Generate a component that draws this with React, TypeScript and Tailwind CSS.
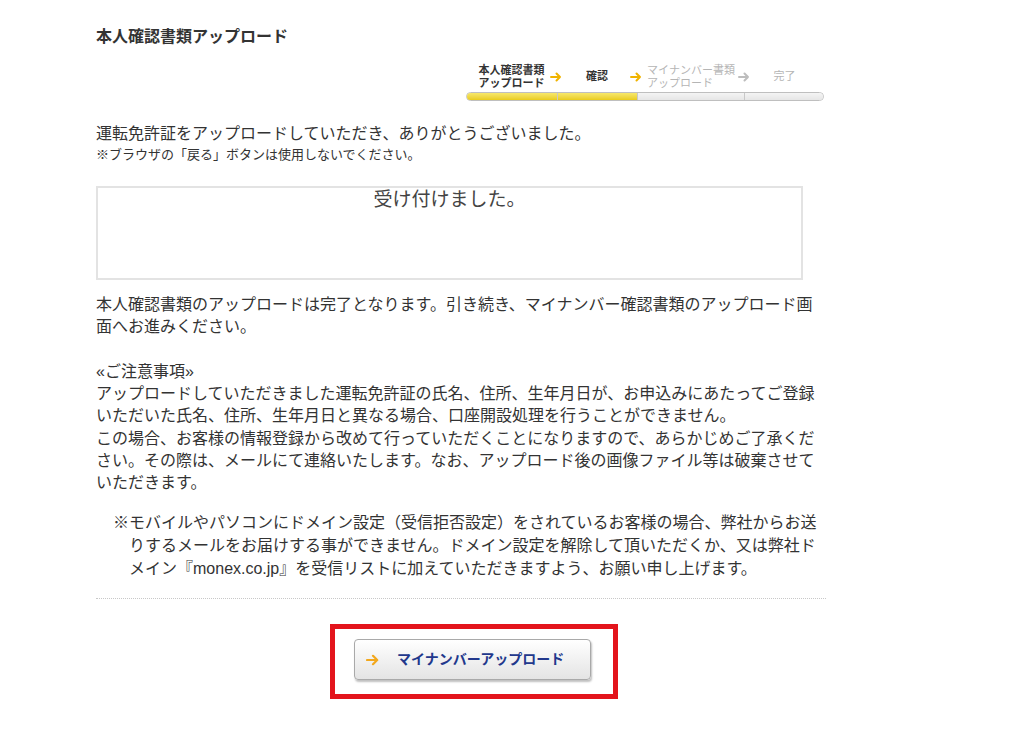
const steps = [
  { label: ["本人確認書類", "アップロード"], width: 91, done: true },
  { label: ["確認"], width: 80, done: true },
  { label: ["マイナンバー書類", "アップロード"], width: 108, done: false },
  { label: ["完了"], width: 79, done: false },
];

const Arrow = ({ color }: { color: string }) => (
  <svg width="12" height="10" viewBox="0 0 12 10" fill="none">
    <path d="M1 5h9M6.5 1.5L10 5l-3.5 3.5" stroke={color} strokeWidth="2" strokeLinecap="round" strokeLinejoin="round" />
  </svg>
);

const Progress = () => (
  <div className="ml-auto mr-[2px] w-[358px]">
    <div className="flex h-[31px] items-center">
      {steps.map((s, i) => (
        <div key={i} className="relative flex h-full items-center justify-center" style={{ width: s.width }}>
          <div className={`text-left text-[11px] leading-[13px] ${s.done ? "font-bold text-[#333]" : "text-[#b5b5b5]"}`}>
            {s.label.map((l) => (
              <div key={l}>{l}</div>
            ))}
          </div>
          {i < steps.length - 1 && (
            <div className="absolute right-[-5px] top-[11px]">
              <Arrow color={s.done ? "#f0b400" : "#bdbdbd"} />
            </div>
          )}
        </div>
      ))}
    </div>
    <div className="flex h-[9px] overflow-hidden rounded-full border border-[#bfbfbf]">
      {steps.map((s, i) => (
        <div
          key={i}
          className={`h-full ${i > 0 ? "border-l border-[#c8c8c8]" : ""} ${
            s.done ? "bg-gradient-to-b from-[#f7e86a] to-[#e9cc16]" : "bg-gradient-to-b from-[#f4f4f4] to-[#e6e6e6]"
          }`}
          style={{ width: s.width }}
        />
      ))}
    </div>
  </div>
);

export default function App() {
  return (
    <div className="min-h-[734px] bg-white pl-[96px] pt-[27px] text-[#333]" style={{ fontFamily: '"Liberation Sans", "Noto Sans CJK JP", sans-serif' }}>
      <div className="w-[730px]">
        <h1 className="text-[16px] font-bold leading-[20px] text-[#333]">本人確認書類アップロード</h1>

        <div className="mt-[14px] flex">
          <Progress />
        </div>

        <p className="mt-[22px] text-[16px] leading-[22px]">運転免許証をアップロードしていただき、ありがとうございました。</p>
        <p className="text-[13px] leading-[20px]">※ブラウザの「戻る」ボタンは使用しないでください。</p>

        <div className="mt-[21px] h-[94px] w-[707px] border-2 border-[#e3e3e3] text-center text-[19px] leading-[24px] text-[#444]">
          受け付けました。
        </div>

        <div className="mt-[14px] text-[16px] leading-[22.25px]">
          <p>本人確認書類のアップロードは完了となります。引き続き、マイナンバー確認書類のアップロード画面へお進みください。</p>
          <p className="mt-[22.25px]">«ご注意事項»</p>
          <p>アップロードしていただきました運転免許証の氏名、住所、生年月日が、お申込みにあたってご登録いただいた氏名、住所、生年月日と異なる場合、口座開設処理を行うことができません。</p>
          <p>この場合、お客様の情報登録から改めて行っていただくことになりますので、あらかじめご了承ください。その際は、メールにて連絡いたします。なお、アップロード後の画像ファイル等は破棄させていただきます。</p>
        </div>

        <p className="mt-[17px] ml-[17px] pl-[16px] -indent-[16px] text-[16px] leading-[23px]">
          ※モバイルやパソコンにドメイン設定（受信拒否設定）をされているお客様の場合、弊社からお送りするメールをお届けする事ができません。ドメイン設定を解除して頂いただくか、又は弊社ドメイン『monex.co.jp』を受信リストに加えていただきますよう、お願い申し上げます。
        </p>

        <div className="mt-[18px] border-t border-dotted border-[#c8c8c8]" />

        <div className="ml-[234px] mt-[25px] w-[288px] border-[5px] border-[#e3141c] pb-[14px] pl-[19px] pr-[22px] pt-[10px]">
          <button className="flex h-[41px] w-[237px] items-center rounded-[4px] border border-[#a9a9a9] bg-gradient-to-b from-[#ffffff] to-[#e4e4e4] pl-[11px] shadow-[1px_2px_2px_rgba(0,0,0,0.25)]">
            <svg width="13" height="12" viewBox="0 0 13 12" fill="none">
              <path d="M1 6h10M7 1.8L11.2 6 7 10.2" stroke="#f2a81d" strokeWidth="2.2" strokeLinecap="round" strokeLinejoin="round" />
            </svg>
            <span className="ml-[18px] text-[14px] font-bold text-[#22388c]">マイナンバーアップロード</span>
          </button>
        </div>
      </div>
    </div>
  );
}
